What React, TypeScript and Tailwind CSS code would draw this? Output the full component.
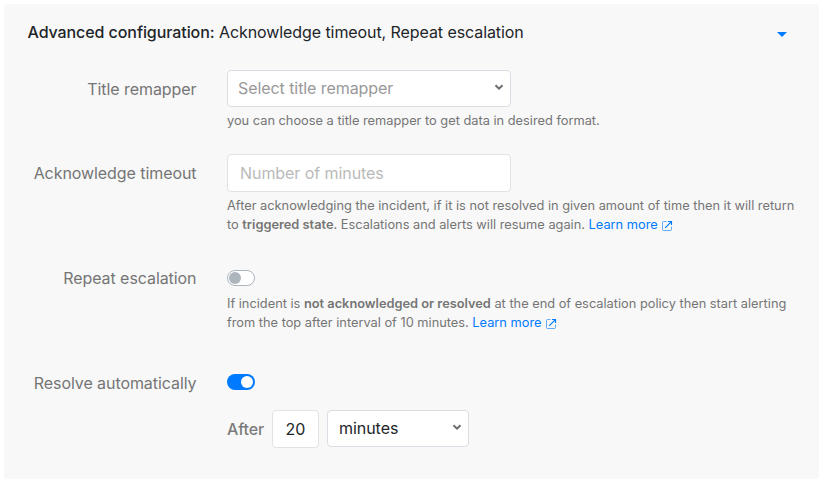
import React from "react";

function Chevron() {
  return (
    <svg width="10" height="7" viewBox="0 0 10 7" fill="none" className="mb-px shrink-0">
      <path d="M1.500 1.200 5 4.700 8.500 1.200" stroke="#6c6c6c" strokeWidth="2" />
    </svg>
  );
}

function LearnMore() {
  return (
    <a className="whitespace-nowrap text-[#007bff]">
      Learn more{" "}
      <svg width="12" height="12" viewBox="0 0 12 12" fill="none" stroke="currentColor" className="-ml-[0.500px] inline align-[-2.500px]">
        <path d="M5.500 1.500H2.500a1 1 0 0 0-1 1v7a1 1 0 0 0 1 1h7a1 1 0 0 0 1-1V6.500" strokeOpacity=".6" />
        <path d="M7 1.500h3.500V5M10.300 1.700 4.200 7.800" strokeWidth="1.200" />
      </svg>
    </a>
  );
}

function Toggle({ on }: { on?: boolean }) {
  return on ? (
    <div className="flex h-4 w-7 items-center justify-end rounded-full bg-[#007bff] px-0.5">
      <div className="size-3 rounded-full bg-white" />
    </div>
  ) : (
    <div className="flex h-4 w-7 items-center rounded-full border border-[#adb5bd] bg-white px-px">
      <div className="size-3 rounded-full bg-[#adb5bd]" />
    </div>
  );
}

function Row({ label, className, labelClass, children }: { label: string; className: string; labelClass: string; children: React.ReactNode }) {
  return (
    <div className={`flex ${className}`}>
      <div className={`w-[192.500px] shrink-0 text-right text-base leading-6 tracking-[-0.070px] text-[#757575] ${labelClass}`}>{label}</div>
      <div className="ml-[30.500px] w-[580px]">{children}</div>
    </div>
  );
}

export default function App() {
  return (
    <div className="h-[486px] w-[824px] bg-white px-1 pt-1 font-['Inter',sans-serif]">
      <div className="h-[475px] w-[815px] rounded-[4px] bg-[#f8f8f8]">
        <div className="flex h-[66px] items-start justify-between pl-[23.500px] pr-8 pt-4 text-base leading-6 tracking-[-0.080px] text-[#212529]">
          <div><span className="font-medium">Advanced configuration:</span> Acknowledge timeout, Repeat escalation</div>
          <svg width="10" height="5" viewBox="0 0 10 5" className="mt-3"><path d="M0 0h10L5 5z" fill="#007bff" /></svg>
        </div>
        <Row label="Title remapper" className="h-[84px]" labelClass="pt-[7px]">
          <div className="flex h-[37px] w-[284px] items-center justify-between rounded-[4px] border border-[#dcdce4] bg-white pb-px pl-2.5 pr-1.5 text-base tracking-[-0.070px] text-[#999]">
            Select title remapper <Chevron />
          </div>
          <p className="mt-1 text-[12.800px] leading-[19px] text-[#757575]">you can choose a title remapper to get data in desired format.</p>
        </Row>
        <Row label="Acknowledge timeout" className="h-[116px]" labelClass="pt-[7px]">
          <div className="flex h-[38px] w-[284px] items-center rounded-[4px] border border-[#e2e2e2] bg-white pl-3 text-base tracking-[-0.070px] text-[#bababa]">Number of minutes</div>
          <p className="mt-1 text-[12.800px] leading-[19px] text-[#757575]">
            After acknowledging the incident, if it is not resolved in given amount of time then it will return<br />
            to <b className="font-semibold">triggered state</b>. Escalations and alerts will resume again. <LearnMore />
          </p>
        </Row>
        <Row label="Repeat escalation" className="h-[104px]" labelClass="-mt-1">
          <Toggle />
          <p className="mt-2 text-[12.800px] leading-[19px] text-[#757575]">
            If incident is <b className="font-semibold">not acknowledged or resolved</b> at the end of escalation policy then start alerting<br />
            from the top after interval of 10 minutes. <LearnMore />
          </p>
        </Row>
        <Row label="Resolve automatically" className="h-[80px]" labelClass="-mt-[3px]">
          <Toggle on />
          <div className="mt-5 flex text-base">
            <span className="w-[45px] font-medium leading-[38px] tracking-[-0.100px] text-[#7c7c7c]">After</span>
            <div className="flex h-[38px] w-[47px] items-center justify-center rounded-[4px] border border-[#e2e2e2] bg-white text-[#212529]">20</div>
            <div className="ml-2 flex h-[37px] w-[142px] items-center justify-between rounded-[4px] border border-[#dcdce4] bg-white pb-px pl-[11px] pr-1.5 tracking-[-0.050px] text-[#212529]">minutes <Chevron /></div>
          </div>
        </Row>
      </div>
    </div>
  );
}
